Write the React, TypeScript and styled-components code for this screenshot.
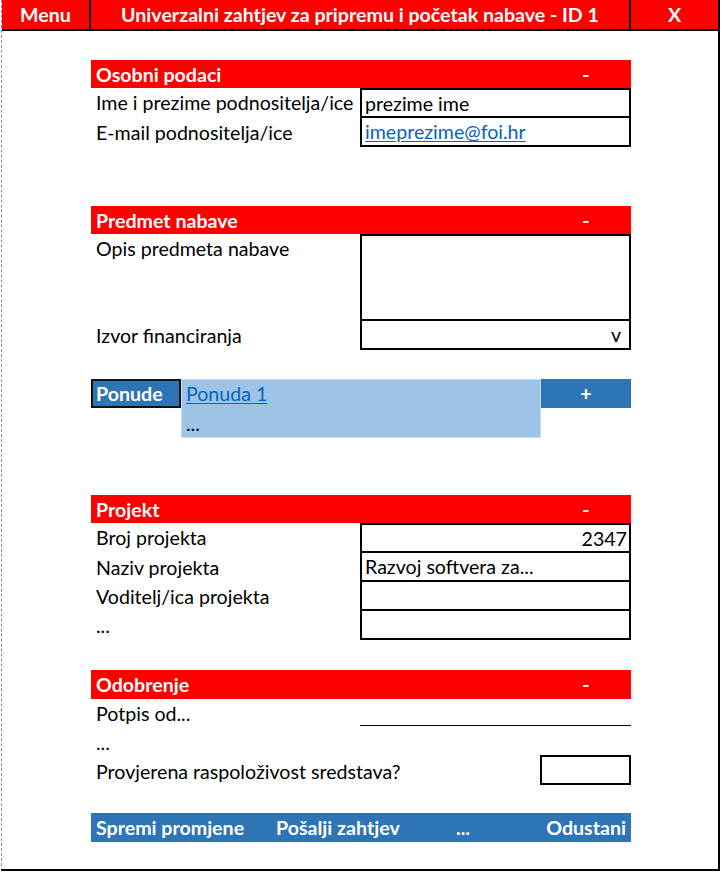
import React from "react";
import styled, { createGlobalStyle } from "styled-components";

const RED = "#ff0000";
const BLUE = "#2e75b6";
const LIGHT_BLUE = "#9dc3e6";
const LINK = "#0563c1";

const GlobalStyle = createGlobalStyle`
  html, body {
    margin: 0;
    background: #fff;
  }
  body {
    font-family: Lato, "Liberation Sans", sans-serif;
    font-size: 19.6px;
    color: #000;
  }
`;

const Frame = styled.div`
  box-sizing: border-box;
  width: 719px;
  height: 871px;
  margin-left: 1px;
  border-left: 1px dashed #8c8c8c;
  border-right: 2px solid #000;
  border-bottom: 2px solid #000;
`;

const TopBar = styled.header`
  display: grid;
  grid-template-columns: 89px 540px 1fr;
  height: 31px;
  box-sizing: border-box;
  border-bottom: 2px solid #000;
  background: ${RED};
`;

const TopCell = styled.div<{ $last?: boolean }>`
  display: flex;
  align-items: center;
  justify-content: center;
  color: #fff;
  font-weight: 700;
  white-space: nowrap;
  border-right: ${(p) => (p.$last ? "none" : "2px solid #000")};
`;

const Body = styled.main`
  width: 540px;
  padding: 29px 0 0 89px;
`;

const Section = styled.section<{ $gap?: number }>`
  margin-top: ${(p) => p.$gap ?? 0}px;
`;

const SectionBar = styled.div<{ $h?: number }>`
  display: grid;
  grid-template-columns: 1fr 90px;
  align-items: center;
  height: ${(p) => p.$h ?? 28}px;
  background: ${RED};
  color: #fff;
  font-weight: 700;
  padding-left: 5px;
  span:last-child {
    text-align: center;
  }
`;

const Row = styled.div<{ $h: number }>`
  display: grid;
  grid-template-columns: 269px 271px;
  height: ${(p) => p.$h}px;
`;

const Label = styled.div`
  height: 29px;
  display: flex;
  align-items: center;
  padding-left: 5px;
  white-space: nowrap;
`;

const Value = styled.div<{ $first?: boolean; $right?: boolean; $pad?: number }>`
  box-sizing: border-box;
  border: 2px solid #000;
  border-top: ${(p) => (p.$first ? "2px solid #000" : "none")};
  display: flex;
  align-items: center;
  justify-content: ${(p) => (p.$right ? "flex-end" : "flex-start")};
  padding: 0 ${(p) => p.$pad ?? 2}px 0 3px;
  white-space: nowrap;
  align-self: stretch;
`;

const TopValue = styled(Value)`
  align-items: flex-start;
`;

const Link = styled.a`
  color: ${LINK};
  text-decoration: underline;
  text-underline-offset: 2px;
`;

const OffersRow = styled.div`
  display: grid;
  grid-template-columns: 90px 360px 90px;
  grid-template-rows: 29px 30px;
`;

const OffersTitle = styled.div`
  box-sizing: border-box;
  background: ${BLUE};
  border: 2px solid #111;
  color: #fff;
  font-weight: 700;
  display: flex;
  align-items: center;
  padding-left: 3px;
`;

const OffersList = styled.div`
  grid-row: span 2;
  background: ${LIGHT_BLUE};
  box-shadow: inset 0 0 0 1px #c9ddf0;
  display: grid;
  grid-template-rows: 29px 30px;
  padding-left: 5px;
  div {
    display: flex;
    align-items: center;
  }
`;

const AddButton = styled.div`
  background: ${BLUE};
  color: #fff;
  font-weight: 700;
  display: flex;
  align-items: center;
  justify-content: center;
`;

const SignLine = styled.div`
  border-bottom: 1px solid #000;
  margin-bottom: 2px;
`;

const CheckRow = styled.div`
  display: grid;
  grid-template-columns: 449px 91px;
  height: 29px;
`;

const CheckBox = styled.div`
  box-sizing: border-box;
  height: 30px;
  margin-top: -2px;
  border: 2px solid #000;
`;

const ActionBar = styled.nav`
  display: grid;
  grid-template-columns: 180px 180px 90px 90px;
  align-items: center;
  height: 29px;
  background: ${BLUE};
  color: #fff;
  font-weight: 700;
`;

const Action = styled.span<{ $right?: boolean }>`
  padding: 0 5px;
  white-space: nowrap;
  text-align: ${(p) => (p.$right ? "right" : "left")};
`;

function Bar({ title, h }: { title: string; h?: number }) {
  return (
    <SectionBar $h={h}>
      <span>{title}</span>
      <span>-</span>
    </SectionBar>
  );
}

export default function App() {
  return (
    <>
      <GlobalStyle />
      <Frame>
        <TopBar>
          <TopCell>Menu</TopCell>
          <TopCell>Univerzalni zahtjev za pripremu i početak nabave - ID 1</TopCell>
          <TopCell $last>X</TopCell>
        </TopBar>

        <Body>
          <Section>
            <Bar title="Osobni podaci" />
            <Row $h={30}>
              <Label>Ime i prezime podnositelja/ice</Label>
              <Value $first>prezime ime</Value>
            </Row>
            <Row $h={29}>
              <Label>E-mail podnositelja/ice</Label>
              <Value>
                <Link href="#">imeprezime@foi.hr</Link>
              </Value>
            </Row>
          </Section>

          <Section $gap={59}>
            <Bar title="Predmet nabave" />
            <Row $h={87}>
              <Label>Opis predmeta nabave</Label>
              <TopValue $first />
            </Row>
            <Row $h={29}>
              <Label>Izvor financiranja</Label>
              <Value $right $pad={8}>
                v
              </Value>
            </Row>
          </Section>

          <Section $gap={29}>
            <OffersRow>
              <OffersTitle>Ponude</OffersTitle>
              <OffersList>
                <div>
                  <Link href="#">Ponuda 1</Link>
                </div>
                <div>...</div>
              </OffersList>
              <AddButton>+</AddButton>
            </OffersRow>
          </Section>

          <Section $gap={57}>
            <Bar title="Projekt" />
            <Row $h={30}>
              <Label>Broj projekta</Label>
              <Value $first $right>
                2347
              </Value>
            </Row>
            <Row $h={29}>
              <Label>Naziv projekta</Label>
              <Value>Razvoj softvera za...</Value>
            </Row>
            <Row $h={29}>
              <Label>Voditelj/ica projekta</Label>
              <Value />
            </Row>
            <Row $h={29}>
              <Label>...</Label>
              <Value />
            </Row>
          </Section>

          <Section $gap={30}>
            <Bar title="Odobrenje" h={29} />
            <Row $h={29}>
              <Label>Potpis od...</Label>
              <SignLine />
            </Row>
            <Row $h={29}>
              <Label>...</Label>
            </Row>
            <CheckRow>
              <Label>Provjerena raspoloživost sredstava?</Label>
              <CheckBox />
            </CheckRow>
          </Section>

          <Section $gap={27}>
            <ActionBar>
              <Action>Spremi promjene</Action>
              <Action>Pošalji zahtjev</Action>
              <Action>...</Action>
              <Action $right>Odustani</Action>
            </ActionBar>
          </Section>
        </Body>
      </Frame>
    </>
  );
}
